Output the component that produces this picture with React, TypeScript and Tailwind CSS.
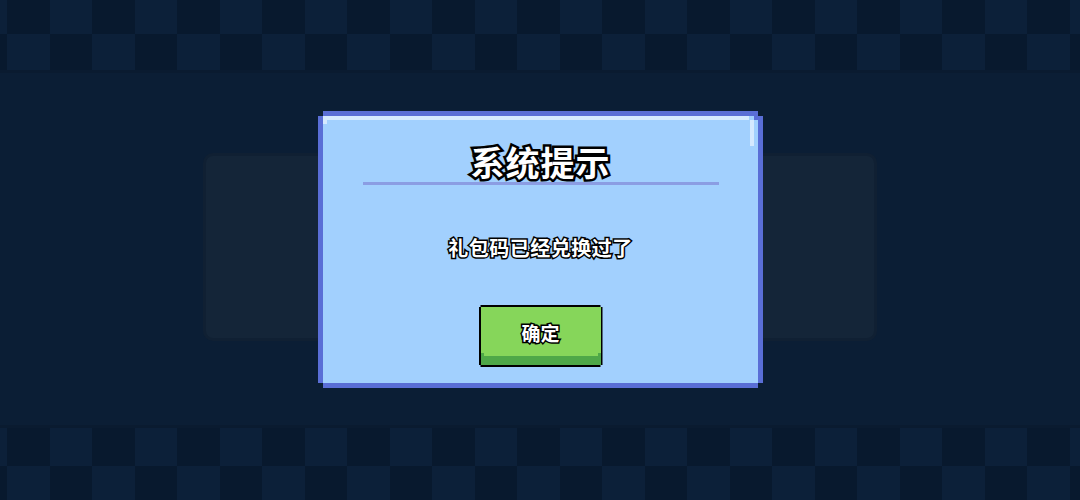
import React from "react";

const COLS = Array.from({ length: 27 }, (_, i) => i);

function CheckerRow({ offset, h }: { offset: number; h: string }) {
  return (
    <div className={`flex ${h} -ml-[35.5px]`}>
      {COLS.map((i) => (
        <div
          key={i}
          className={`w-[42.5px] shrink-0 ${(i + offset) % 2 === 0 ? "bg-[#0c2039]" : "bg-[#08192e]"}`}
        />
      ))}
    </div>
  );
}

const outline = "[paint-order:stroke_fill] [-webkit-text-stroke:3px_#000]";

export default function App() {
  return (
    <div className="relative w-[1080px] h-[500px] overflow-hidden bg-[#0b1e35] flex flex-col font-['Noto_Sans_CJK_SC',sans-serif]">
      {/* top checker band */}
      <div className="flex flex-col border-b-[3px] border-[#0a1b30]">
        <CheckerRow offset={0} h="h-[34px]" />
        <CheckerRow offset={1} h="h-[36px]" />
      </div>

      {/* middle */}
      <div className="flex-1 flex items-start justify-center pt-[80px]">
        <div className="w-[674px] h-[188px] rounded-[10px] border-[3px] border-[#102033] bg-[#142538]" />
      </div>

      {/* bottom checker band */}
      <div className="flex flex-col border-t-[3px] border-[#0a1b30]">
        <CheckerRow offset={0} h="h-[38px]" />
        <CheckerRow offset={1} h="h-[34px]" />
      </div>

      {/* dialog */}
      <div className="absolute left-[318px] top-[111px] w-[445px] h-[277px] bg-[#5a6ed6] [clip-path:polygon(5px_0,calc(100%-5px)_0,calc(100%-5px)_5px,100%_5px,100%_calc(100%-5px),calc(100%-5px)_calc(100%-5px),calc(100%-5px)_100%,5px_100%,5px_calc(100%-5px),0_calc(100%-5px),0_5px,5px_5px)] p-[5px]">
        <div className="relative w-full h-full bg-[#a2d0fe] flex flex-col items-center">
          <div className="absolute left-0 top-0 right-[9px] h-[4px] bg-[#d5e9ff]" />
          <div className="absolute left-0 top-0 w-[4px] h-[8px] bg-[#d5e9ff]" />
          <div className="absolute right-[4px] top-[4px] w-[4px] h-[26px] bg-[#d5e9ff]" />
          <div className="absolute right-0 top-0 w-[4px] h-[4px] bg-[#5a6ed6]" />

          <div className="mt-[26px] text-[34px] leading-[40px] font-bold text-white tracking-[1px] [paint-order:stroke_fill] [-webkit-text-stroke:5px_#000]">
            系统提示
          </div>
          <div className="mt-0 w-[356px] h-[3px] bg-[#8b9de3]" />

          <div className={`mt-[50px] text-[20px] leading-[26px] font-bold text-white tracking-[0.5px] ${outline}`}>
            礼包码已经兑换过了
          </div>

          <button className="mt-[44px] w-[124px] h-[62px] bg-black p-[2px] [clip-path:polygon(2px_0,calc(100%-2px)_0,calc(100%-2px)_2px,100%_2px,100%_calc(100%-2px),calc(100%-2px)_calc(100%-2px),calc(100%-2px)_100%,2px_100%,2px_calc(100%-2px),0_calc(100%-2px),0_2px,2px_2px)]">
            <div className="relative w-full h-full bg-[#86d65a] flex items-center justify-center">
              <div className="absolute left-0 right-0 bottom-0 h-[9px] bg-[#4ea848]" />
              <div className="absolute left-0 bottom-[9px] w-[3px] h-[3px] bg-[#4ea848]" />
              <div className="absolute right-0 bottom-[9px] w-[3px] h-[3px] bg-[#4ea848]" />
              <span className={`relative -mt-[6px] text-[19px] leading-[24px] font-bold text-white ${outline}`}>
                确定
              </span>
            </div>
          </button>
        </div>
      </div>
    </div>
  );
}
